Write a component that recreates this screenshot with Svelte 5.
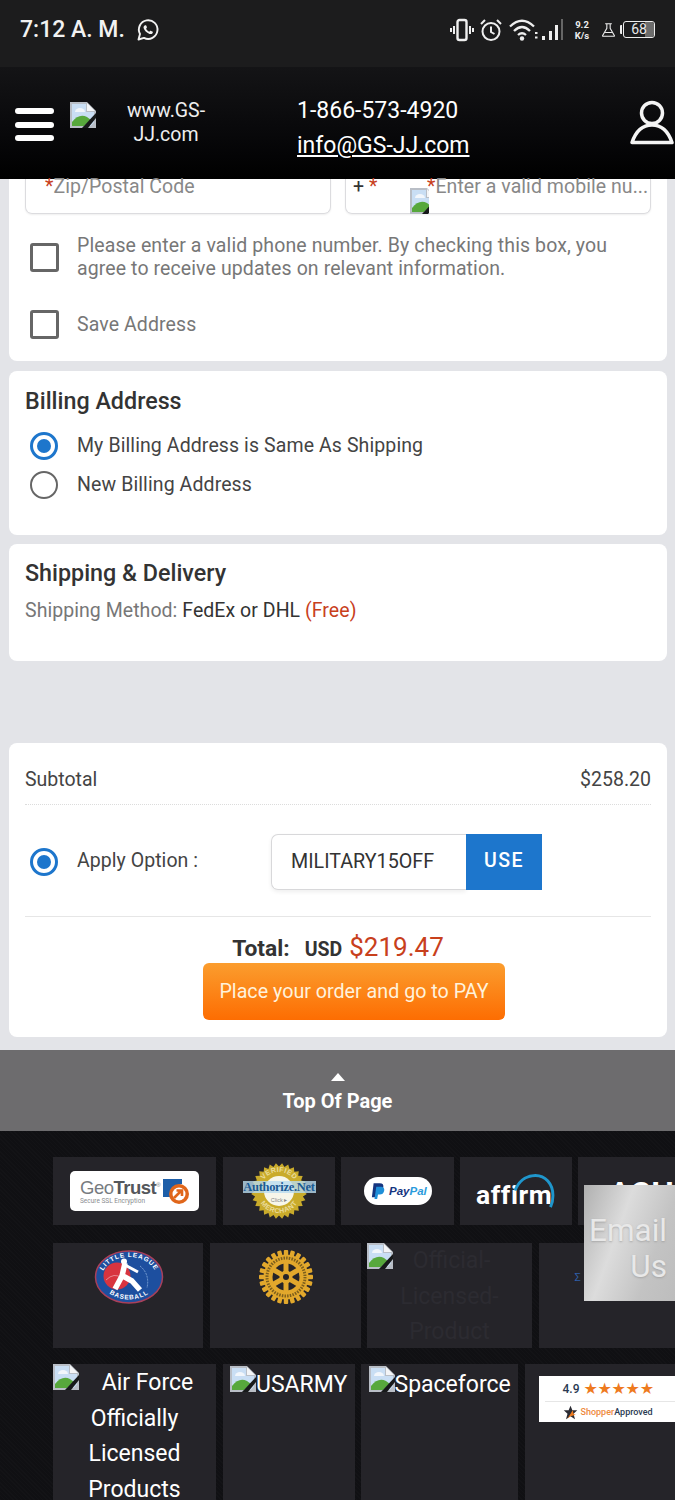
<script>
  const gearTeeth = Array.from({ length: 24 }, (_, i) => i * 15);
  const spokes = Array.from({ length: 6 }, (_, i) => i * 60);
  const sealPoints = Array.from({ length: 56 }, (_, i) => {
    const r = i % 2 ? 28 : 24.5;
    const a = (i * Math.PI) / 28;
    return `${(30 + r * Math.cos(a)).toFixed(1)},${(30 + r * Math.sin(a)).toFixed(1)}`;
  }).join(' ');
</script>

{#snippet broken(cls)}
  <svg class="broken {cls}" viewBox="0 0 26 26" aria-hidden="true">
    <path d="M0 0H17L26 9V26H0Z" fill="#b9bec6" />
    <path d="M2 2H16V10H24V24H2Z" fill="#c9def4" />
    <path d="M17 1V9H25Z" fill="#f4f5f7" />
    <path d="M5 10a5 4 0 0 1 10 0Z" fill="#f2f6fb" />
    <path d="M2 24V20Q9 11 17 15L21 18L14 24Z" fill="#57a83c" />
    <path d="M12 26L26 11V16L18 26Z" fill="#17191a" />
    <path d="M19 26L26 18V26Z" fill="#b9bec6" />
  </svg>
{/snippet}

{#snippet check(text)}
  <span class="box"></span><span>{text}</span>
{/snippet}

<div class="page">
  <div class="status">
    <div class="time">7:12 A. M.</div>
    <svg class="wa" viewBox="0 0 24 24" aria-hidden="true">
      <path d="M2.500 21.500l1.500-5.500A9.300 9.300 0 1 1 8 19.900Z" fill="none" stroke="#f2f2f2" stroke-width="1.900" stroke-linejoin="round" />
      <path d="M8.600 7.600c.5-.6 1.300-.6 1.600 0l.7 1.500c.1.4 0 .7-.3 1l-.5.6c.7 1.400 1.800 2.400 3.200 3.100l.7-.7c.3-.3.6-.3 1-.2l1.400.7c.5.3.6 1 .1 1.600-.7.9-1.800 1.100-3 .7-3-1-5.200-3.200-5.900-5.800-.2-1 .3-1.900 1-2.500Z" fill="#f2f2f2" />
    </svg>
    <div class="status-right">
      <svg class="si vib" viewBox="0 0 24 24" aria-hidden="true">
        <rect x="7.500" y="2" width="9" height="20" rx="2" fill="none" stroke="#eee" stroke-width="2.400" />
        <path d="M4 8v8M1 10v4M20 8v8M23 10v4" stroke="#eee" stroke-width="2" />
      </svg>
      <svg class="si alarm" viewBox="0 0 24 24" aria-hidden="true">
        <circle cx="12" cy="13.500" r="8.500" fill="none" stroke="#eee" stroke-width="2" />
        <path d="M12 8.500v5.500l3.500 2M2 6l4-4M22 6l-4-4" fill="none" stroke="#eee" stroke-width="2" />
      </svg>
      <svg class="wifi" viewBox="0 0 54 24" aria-hidden="true">
        <path d="M1 8.500Q13-3 25 8.500M5 13Q13 5 21 13M9 17Q13 13.500 17 17" fill="none" stroke="#eee" stroke-width="2.300" />
        <circle cx="13" cy="20.500" r="2.200" fill="#eee" />
        <path d="M26 15h2.500M26 19.500h2.500" stroke="#eee" stroke-width="2.200" />
        <rect x="33" y="18" width="3" height="4" fill="#eee" />
        <rect x="40" y="13" width="3" height="9" fill="#eee" />
        <rect x="46" y="7" width="3" height="15" fill="#eee" />
        <rect x="52" y="1" width="2" height="21" fill="#666" />
      </svg>
      <div class="speed">9.2<br />K/s</div>
      <svg class="si flask" viewBox="0 0 18 18" aria-hidden="true">
        <path d="M5 1.500h8M7 1.500v5.500L2 15.500q-.5 1 .5 1h13q1 0 .5-1L11 7V1.500M5 12h8" fill="none" stroke="#eee" stroke-width="1.300" />
      </svg>
      <div class="battery"><span class="nub"></span><span class="cell"><span class="level"></span><span class="num">68</span></span></div>
    </div>
  </div>

  <header class="top">
    <div class="burger"><i></i><i></i><i></i></div>
    {@render broken('logo-broken')}
    <div class="site">www.GS-<br />JJ.com</div>
    <div class="contact">
      <div>1-866-573-4920</div>
      <div class="mail">info@GS-JJ.com</div>
    </div>
    <svg class="user" viewBox="0 0 44 46" aria-hidden="true">
      <circle cx="22" cy="13" r="10.500" fill="none" stroke="#f4f4f4" stroke-width="3.500" />
      <path d="M2 42.500Q8 25 22 25T42 42.500Z" fill="none" stroke="#f4f4f4" stroke-width="3.500" stroke-linejoin="round" />
    </svg>
  </header>

  <main class="content">
    <section class="card first">
      <div class="fields">
        <div class="field zip"><b>*</b>Zip/Postal Code</div>
        <div class="field phone">
          <span class="plus">+ <b>*</b></span>
          <span class="phone-broken">{@render broken('')}</span>
          <span class="placeholder"><b>*</b>Enter a valid mobile nu...</span>
        </div>
      </div>
      <div class="opt consent">{@render check('Please enter a valid phone number. By checking this box, you agree to receive updates on relevant information.')}</div>
      <div class="opt save">{@render check('Save Address')}</div>
    </section>

    <section class="card billing">
      <h2>Billing Address</h2>
      <div class="radio-row first-radio"><span class="radio on"></span><span>My Billing Address is Same As Shipping</span></div>
      <div class="radio-row"><span class="radio"></span><span>New Billing Address</span></div>
    </section>

    <section class="card shipping">
      <h2>Shipping &amp; Delivery</h2>
      <p><span class="muted">Shipping Method:</span> FedEx or DHL <span class="free">(Free)</span></p>
    </section>

    <section class="card summary">
      <div class="subtotal"><span>Subtotal</span><span>$258.20</span></div>
      <div class="apply">
        <span class="radio on"></span>
        <span class="apply-label">Apply Option :</span>
        <div class="coupon"><div class="code">MILITARY15OFF</div><div class="use">USE</div></div>
      </div>
      <div class="total"><b class="t-label">Total:</b><b class="usd">USD</b><span class="amount">$219.47</span></div>
      <div class="pay-wrap"><div class="pay">Place your order and go to PAY</div></div>
    </section>
  </main>

  <div class="totop">
    <span class="tri"></span>
    <b>Top Of Page</b>
  </div>

  <footer class="foot">
    <div class="row r1">
      <div class="tile">
        <div class="geo">
          <div class="geo-text"><div class="geo-name">Geo<b>Trust</b><sup>®</sup></div><div class="geo-sub">Secure SSL Encryption</div></div>
          <svg class="geo-icon" viewBox="0 0 28 28" aria-hidden="true">
            <path d="M1 2H20V7Q10 8 8 20H1Z" fill="#1d5ea8" />
            <circle cx="17" cy="17" r="10" fill="#e0661a" />
            <circle cx="17" cy="17" r="6.500" fill="#fff" />
            <path d="M12 21L19 14M14.500 13.500H20V19" fill="none" stroke="#e0661a" stroke-width="2.600" />
          </svg>
        </div>
      </div>
      <div class="tile">
        <svg class="seal" viewBox="0 0 60 60" aria-hidden="true">
          <polygon points={sealPoints} fill="#c9ab2b" />
          <circle cx="30" cy="30" r="15" fill="#f7f6ea" />
          <defs>
            <path id="arcTop" d="M11 30a19 19 0 0 1 38 0" />
            <path id="arcBot" d="M8 30a22 22 0 0 0 44 0" />
          </defs>
          <text class="seal-arc"><textPath href="#arcTop" startOffset="50%" text-anchor="middle">VERIFIED</textPath></text>
          <text class="seal-arc"><textPath href="#arcBot" startOffset="50%" text-anchor="middle">MERCHANT</textPath></text>
          <text class="seal-click" x="30" y="41" text-anchor="middle">Click ▸</text>
        </svg>
        <span class="auth">Authorize.Net</span>
      </div>
      <div class="tile">
        <div class="pp">
          <svg class="pp-icon" viewBox="0 0 16 20" aria-hidden="true">
            <path d="M3 1H10Q15 1 14 6T8 11H6L5 17H1Z" fill="#15357f" />
            <path d="M6 5H12Q16 6 15 10T10 14H8L7 19H4Z" fill="#1f8fd8" />
          </svg>
          <span class="pay-w">Pay</span><span class="pal">Pal</span>
        </div>
      </div>
      <div class="tile">
        <div class="affirm">
          <svg class="arc" viewBox="0 0 44 36" aria-hidden="true"><path d="M3 17C8 4 18 1.500 24 1.500 34 1.500 42 10 42 22 42 27 41 31 39.500 34" fill="none" stroke="#1f96cc" stroke-width="3" /></svg>
          <span>affirm</span>
        </div>
      </div>
      <div class="tile ach"><b>ACH</b></div>
    </div>

    <div class="row r2">
      <div class="tile">
        <svg class="ll" viewBox="0 0 70 54" aria-hidden="true">
          <ellipse cx="35" cy="27" rx="33.500" ry="26" fill="#1d4f9f" stroke="#a9405a" stroke-width="1.500" />
          <circle cx="23" cy="26" r="13.500" fill="#d8343f" />
          <path d="M12 30Q20 22 28 28" fill="none" stroke="#e98890" stroke-width="1" />
          <circle cx="30" cy="11.500" r="3" fill="#fff" />
          <path d="M31 13L28 26L21 39M29 26L38 31L46 40" fill="none" stroke="#fff" stroke-width="5.500" stroke-linejoin="round" />
          <path d="M31 15L44 22" fill="none" stroke="#fff" stroke-width="3" />
          <path d="M46 16Q56 24 53 38" fill="none" stroke="#8fb3e0" stroke-width=".8" stroke-dasharray="2 1" />
          <path id="llTop" d="M7 29a28 22 0 0 1 56 0" fill="none" />
          <path id="llBot" d="M5 25a30 24.500 0 0 0 60 0" fill="none" />
          <text class="ll-t"><textPath href="#llTop" startOffset="50%" text-anchor="middle">LITTLE LEAGUE</textPath></text>
          <text class="ll-t"><textPath href="#llBot" startOffset="50%" text-anchor="middle">BASEBALL</textPath></text>
        </svg>
      </div>
      <div class="tile">
        <svg class="rotary" viewBox="0 0 56 56" aria-hidden="true">
          {#each gearTeeth as t}
            <rect x="25.800" y="1" width="4.400" height="6" rx="1" fill="#e2a82c" transform="rotate({t} 28 28)" />
          {/each}
          <circle cx="28" cy="28" r="22.500" fill="#e2a82c" />
          <circle cx="28" cy="28" r="19" fill="none" stroke="#7d5f1c" stroke-width="3" stroke-dasharray="1.500 1.200" />
          <circle cx="28" cy="28" r="16" fill="#e2a82c" />
          <circle cx="28" cy="28" r="13.500" fill="#252429" />
          {#each spokes as s}
            <rect x="25.500" y="12" width="5" height="16" fill="#e2a82c" transform="rotate({s} 28 28)" />
          {/each}
          <circle cx="28" cy="28" r="6.500" fill="#e2a82c" />
          <circle cx="28" cy="28" r="3" fill="#252429" />
        </svg>
      </div>
      <div class="tile dark-alt">
        {@render broken('inline-broken')}
        <span class="official">Official-Licensed-Product</span>
      </div>
      <div class="tile"><span class="sigma">Σ</span></div>
    </div>

    <div class="row r3">
      <div class="tile air">
        {@render broken('inline-broken')}
        <span class="air-t">Air Force Officially Licensed Products</span>
      </div>
      <div class="tile named">{@render broken('inline-broken')}<span>USARMY</span></div>
      <div class="tile named">{@render broken('inline-broken')}<span>Spaceforce</span></div>
      <div class="tile">
        <div class="sa">
          <div class="sa-top"><span class="sa-num">4.9</span><span class="sa-stars">★★★★★</span></div>
          <div class="sa-bot">
            <svg class="sa-star" viewBox="0 0 20 20" aria-hidden="true">
              <path d="M10 1l2.500 6H19l-5 4.500L16 19l-6-4-6 4 2-7.500L1 7h6.500Z" fill="#2c2c34" />
              <path d="M6 18L13 7l1 5 3 1-7 2Z" fill="#ee7a1e" />
            </svg>
            <span class="sa-shop">Shopper</span><span class="sa-app">Approved</span>
          </div>
        </div>
      </div>
    </div>
  </footer>

  <div class="email">Email<br />Us</div>
</div>

<style>
  :global(body) { margin: 0; background: #e3e4e8; }
  .page {
    position: relative; width: 675px; height: 1500px; overflow: hidden;
    background: #e3e4e8; font-family: Roboto, "Liberation Sans", sans-serif; color: #333;
  }
  .status {
    height: 67px; box-sizing: border-box; padding: 0 20px 8px; background: #1c1c1d;
    display: flex; align-items: center; color: #f2f2f2;
  }
  .time { font-size: 23px; font-weight: 500; }
  .wa { width: 24px; height: 24px; margin-left: 11px; }
  .status-right { margin-left: auto; display: flex; align-items: center; }
  .si { display: block; }
  .vib { width: 24px; height: 24px; }
  .alarm { width: 24px; height: 24px; margin-left: 5px; }
  .wifi { width: 54px; height: 24px; margin-left: 6px; }
  .speed { font-size: 9.500px; font-weight: 700; line-height: 11px; text-align: center; margin-left: 10px; width: 18px; color: #eee; }
  .flask { width: 15px; height: 16px; margin-left: 10px; }
  .battery { display: flex; align-items: center; margin-left: 4px; }
  .nub { width: 2px; height: 9px; background: #eee; border-radius: 1px 0 0 1px; }
  .cell {
    position: relative; width: 30px; height: 15px; border: 1.500px solid #eee; border-radius: 3px;
    margin-left: 1px; overflow: hidden; display: block;
  }
  .level { position: absolute; right: 0; top: 0; bottom: 0; width: 9px; background: #6c6c6c; }
  .num { position: absolute; inset: 0; text-align: center; font-size: 14px; line-height: 15px; color: #e8e8e8; }

  .top {
    position: relative; height: 112px; box-sizing: border-box; background: linear-gradient(#141416, #08080a 60%, #000);
    color: #fff; display: grid; grid-template-columns: 55px 40px 112px 1fr 44px; padding-left: 15px; overflow: hidden;
  }
  .burger { display: flex; flex-direction: column; gap: 7.500px; padding-top: 41px; }
  .burger i { display: block; width: 39px; height: 6px; border-radius: 3px; background: #fff; }
  :global(.logo-broken) { margin-top: 35px; }
  .site { font-size: 19.500px; line-height: 24px; text-align: center; padding-top: 32px; color: #eee; }
  .contact { padding: 26px 0 0 75px; font-size: 23px; line-height: 35px; color: #fff; white-space: nowrap; }
  .mail { text-decoration: underline; text-underline-offset: 2px; text-decoration-thickness: 1.500px; }
  .user { width: 44px; height: 46px; margin-top: 33px; margin-left: -1px; }
  .broken { display: block; width: 26px; height: 26px; flex: none; }

  .content { display: flex; flex-direction: column; padding: 0 8px 0 9px; }
  .card { background: #fff; border-radius: 0 0 8px 8px; box-sizing: border-box; padding: 0 16px; }
  .first { height: 182px; }
  .fields { display: grid; grid-template-columns: 306px 306px; gap: 14px; }
  .field {
    position: relative; height: 35px; box-sizing: border-box; border: 1px solid #dcdcdf; border-top: 0;
    border-radius: 0 0 7px 7px; box-shadow: 0 1px 2px #0001; font-size: 19.500px; line-height: 15px; color: #888;
    white-space: nowrap;
  }
  .zip { padding-left: 19px; letter-spacing: .05px; }
  .field b { color: #c8401c; font-weight: 400; }
  .phone { color: #888; }
  .plus { position: absolute; left: 7px; top: 0; color: #333; }
  .phone-broken { position: absolute; left: 64px; top: 9px; width: 19px; height: 26px; overflow: hidden; }
  .placeholder { position: absolute; left: 81px; top: 0; letter-spacing: .05px; }
  .opt { display: flex; gap: 18px; color: #777; font-size: 19.500px; line-height: 23px; letter-spacing: .1px; padding-left: 5px; }
  .box { flex: none; width: 23px; height: 23px; border: 3px solid #666; border-radius: 3px; }
  .consent { margin-top: 20px; width: 600px; align-items: center; }
  .save { margin-top: 30px; align-items: center; }

  h2 { margin: 0; font-size: 23.300px; font-weight: 500; line-height: 30px; color: #333; }
  .billing { margin-top: 10px; height: 164px; border-radius: 8px; padding-top: 15px; }
  .radio-row { display: flex; align-items: center; gap: 19px; padding-left: 5px; height: 39px; font-size: 19.500px; letter-spacing: .1px; color: #444; }
  .first-radio { margin-top: 10px; }
  .radio { flex: none; width: 28px; height: 28px; box-sizing: border-box; border: 2px solid #666; border-radius: 50%; position: relative; }
  .radio.on { border: 3px solid #1d76cc; }
  .radio.on::after { content: ""; position: absolute; inset: 4px; border-radius: 50%; background: #1d76cc; }
  .shipping { margin-top: 9px; height: 117px; border-radius: 8px; padding-top: 14px; }
  .shipping p { margin: 8px 0 0; font-size: 19.500px; line-height: 30px; color: #333; letter-spacing: .05px; }
  .muted { color: #777; }
  .free { color: #c8401c; }

  .summary { margin-top: 82px; height: 294px; border-radius: 8px; }
  .subtotal {
    height: 62px; box-sizing: border-box; padding-top: 22px; display: flex; justify-content: space-between;
    font-size: 19.500px; line-height: 30px; color: #444; border-bottom: 1px dotted #dcdcdc;
  }
  .apply {
    height: 112px; box-sizing: border-box; padding: 29px 0 0 5px; display: flex; align-items: flex-start;
    border-bottom: 1px solid #e6e6e6;
  }
  .apply .radio { margin-top: 14px; }
  .apply-label { margin-left: 19px; font-size: 19.500px; line-height: 54px; color: #444; letter-spacing: .05px; }
  .coupon { display: flex; margin-left: 73px; height: 56px; }
  .code {
    width: 195px; box-sizing: border-box; padding-left: 19px; border: 1px solid #d8d8da; border-right: 0;
    border-radius: 7px 0 0 7px; font-size: 19.700px; line-height: 54px; color: #333; box-shadow: 0 2px 4px #0001;
  }
  .use { width: 76px; background: #1d76cc; color: #fff; font-size: 19.500px; font-weight: 500; letter-spacing: 1.500px; line-height: 54px; text-align: center; }
  .total { display: flex; align-items: baseline; justify-content: center; height: 46px; box-sizing: border-box; padding: 15px 0 0; line-height: 30px; }
  .t-label { font-size: 22.800px; font-weight: 700; color: #333; margin-right: 15px; }
  .usd { font-size: 19.500px; font-weight: 700; color: #333; margin-right: 7px; }
  .amount { font-size: 26px; color: #c8401c; }
  .pay-wrap { display: flex; justify-content: center; padding-left: 32px; }
  .pay {
    width: 302px; height: 57px; border-radius: 6px; background: linear-gradient(#fb9d2e, #fd6d02);
    color: #fff2dc; font-size: 19.700px; line-height: 57px; text-align: center;
  }

  .totop {
    margin-top: 13px; height: 81px; background: #6d6c6e; color: #fff; display: flex; flex-direction: column;
    align-items: center; box-sizing: border-box; padding-top: 23px;
  }
  .tri { width: 0; height: 0; border: 7px solid transparent; border-top: 0; border-bottom: 8px solid #fff; }
  .totop b { font-size: 20px; font-weight: 700; line-height: 30px; margin-top: 5px; }

  .foot {
    height: 369px; box-sizing: border-box; overflow: hidden; padding: 26px 0 0 53px; display: flex; flex-direction: column;
    background: #111114 repeating-linear-gradient(45deg, #131316 0 1px, #101013 1px 3px);
  }
  .row { display: grid; gap: 0 6.500px; flex: none; }
  .r1 { grid-template-columns: 163px 112px 112.500px 111.500px 110px; height: 68px; }
  .r2 { grid-template-columns: 150px 151px 165px 137px; height: 105px; margin-top: 18px; }
  .r3 { grid-template-columns: 163px 132px 157px 150px; height: 150px; margin-top: 16px; }
  .tile { background: #252429; position: relative; overflow: hidden; color: #fff; }

  .geo {
    position: absolute; left: 17px; top: 14px; width: 129px; height: 40px; box-sizing: border-box; background: #fff;
    border-radius: 5px; display: flex; align-items: center; padding-left: 10px;
  }
  .geo-text { width: 82px; }
  .geo-name { font-size: 18.500px; line-height: 17px; color: #777b80; letter-spacing: -.5px; white-space: nowrap; font-family: "Liberation Sans", sans-serif; }
  .geo-name b { color: #54575b; }
  .geo-name sup { font-size: 6px; }
  .geo-sub { font-size: 6.500px; line-height: 8px; color: #8a8d90; white-space: nowrap; }
  .geo-icon { width: 28px; height: 28px; }
  .seal { position: absolute; left: 26px; top: 4px; width: 60px; height: 60px; }
  .seal-arc { font: 700 7px "Liberation Sans", sans-serif; fill: #e9dc9b; letter-spacing: .4px; }
  .seal-click { font: 5.500px "Liberation Sans", sans-serif; fill: #888; }
  .auth {
    position: absolute; left: 20px; top: 24px; width: 73px; text-align: center; font: 700 12.500px "Liberation Serif", serif;
    color: #1a5a94; background: #b9dcefcc; letter-spacing: -.3px; white-space: nowrap; line-height: 12px;
  }
  .pp {
    position: absolute; left: 23px; top: 20px; width: 68px; height: 28px; background: #fff; border-radius: 14px;
    display: flex; align-items: center; box-sizing: border-box; padding-left: 7px;
    font: italic 700 11.500px "Liberation Sans", sans-serif; white-space: nowrap;
  }
  .pp-icon { width: 14px; height: 18px; margin-right: 4px; }
  .pay-w { color: #15357f; }
  .pal { color: #2a9bdc; }
  .affirm { position: absolute; left: 16px; top: 18px; color: #fff; font: 700 26.500px Roboto, sans-serif; line-height: 40px; height: 40px; letter-spacing: .6px; }
  .arc { position: absolute; left: 36px; top: -1px; width: 43px; height: 35px; }
  .ach b { position: absolute; left: 31px; top: 16px; font-size: 32px; line-height: 40px; color: #fff; }
  .ll { position: absolute; left: 41px; top: 7px; width: 70px; height: 54px; }
  .ll-t { font: 700 6.500px "Liberation Sans", sans-serif; fill: #fff; letter-spacing: .8px; }
  .rotary { position: absolute; left: 48px; top: 6px; width: 56px; height: 56px; }
  :global(.inline-broken) { float: left; }
  .official { display: block; padding: 0 22px; font-size: 23px; line-height: 35.700px; text-align: center; color: #2c2b31; word-break: break-word; }
  .sigma { position: absolute; left: 36px; top: 28px; font-size: 11px; color: #2f5fa8; }
  .air-t { display: block; font-size: 23px; line-height: 35.700px; text-align: center; padding-top: 1px; }
  .named { display: flex; align-items: flex-start; font-size: 23px; line-height: 38px; padding: 2px 0 0 7.500px; white-space: nowrap; }
  .sa { position: absolute; left: 14px; top: 12px; width: 145px; height: 46px; background: #fff; box-sizing: border-box; }
  .sa-top { height: 25px; display: flex; align-items: center; margin: 0 6px; padding-left: 18px; border-bottom: 1px solid #e6e6e6; gap: 4px; }
  .sa-num { font-size: 12px; font-weight: 500; color: #2a3a52; }
  .sa-stars { font: 16px "DejaVu Sans", sans-serif; color: #ee7a1e; letter-spacing: -.3px; }
  .sa-bot { display: flex; align-items: center; padding-left: 24px; height: 20px; font-size: 9px; font-weight: 500; white-space: nowrap; }
  .sa-star { width: 15px; height: 15px; margin-right: 3px; }
  .sa-shop { color: #ee8a3e; }
  .sa-app { color: #2a3a52; }

  .email {
    position: absolute; left: 584px; top: 1185px; width: 91px; height: 116px; box-sizing: border-box; padding: 28px 8px 0 0;
    background: linear-gradient(110deg, #b0b0b0, #dcdcdc 38%, #c3c3c3 72%, #bdbdbd); color: #e8e8e8; font-size: 31.500px; line-height: 36px;
    text-align: right; text-shadow: 0 1px 2px #8888;
  }
</style>
